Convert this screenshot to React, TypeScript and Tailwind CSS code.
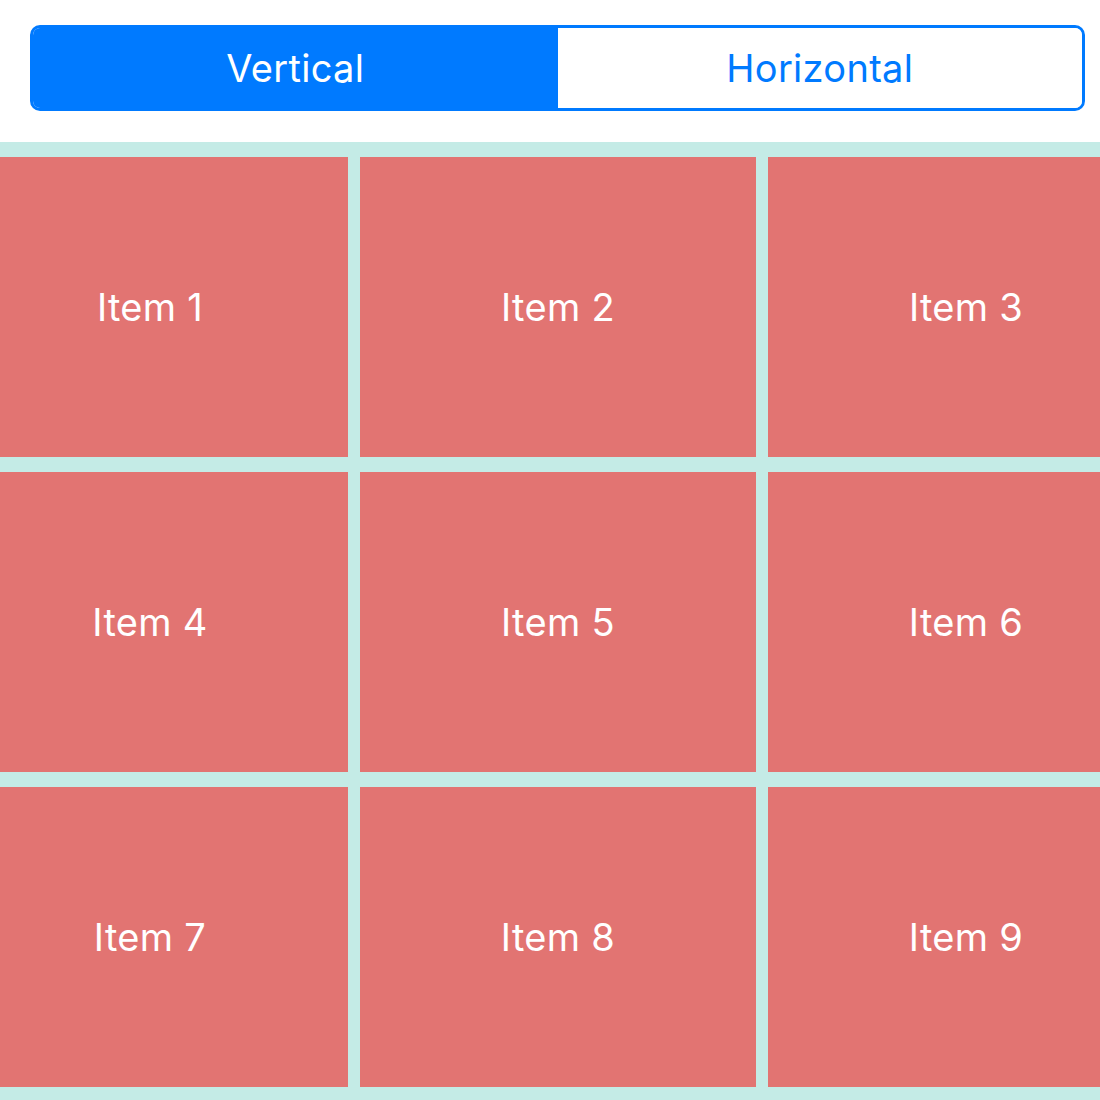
import { useState } from "react";

const items = Array.from({ length: 9 }, (_, i) => `Item ${i + 1}`);

const App = () => {
  const [mode, setMode] = useState<"vertical" | "horizontal">("vertical");

  return (
    <div
      className="w-[1100px] h-[1100px] bg-white overflow-hidden"
      style={{ fontFamily: "Inter, 'Noto Sans', sans-serif" }}
    >
      <div className="pt-[25px] pl-[30px] pr-[15px] pb-[31px]">
        <div className="flex h-[86px] rounded-[10px] border-[3px] border-[#007aff] overflow-hidden">
          {(["vertical", "horizontal"] as const).map((m) => (
            <button
              key={m}
              onClick={() => setMode(m)}
              className={`flex-1 flex items-center justify-center text-[38px] tracking-[0.3px] pt-[1px] ${
                mode === m ? "bg-[#007aff] text-white" : "bg-white text-[#007aff]"
              }`}
            >
              {m === "vertical" ? "Vertical" : "Horizontal"}
            </button>
          ))}
        </div>
      </div>

      <div className="bg-[#c4ebe6] pt-[15px] pb-[15px] overflow-hidden">
        <div className="grid grid-cols-[396px_396px_396px] gap-x-[12px] gap-y-[15px] ml-[-48px] w-[1212px]">
          {items.map((item) => (
            <div
              key={item}
              className="h-[300px] bg-[#e27472] flex items-center justify-center text-white text-[38px] tracking-[0.3px] pt-[1px]"
            >
              {item}
            </div>
          ))}
        </div>
      </div>
    </div>
  );
};

export default App;
